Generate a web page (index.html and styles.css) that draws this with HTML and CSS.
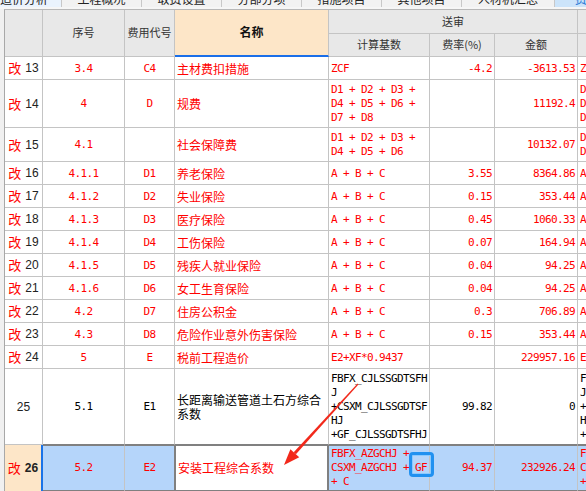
FILE: index.html
```html
<!DOCTYPE html>
<html lang="zh-CN">
<head>
<meta charset="utf-8">
<title>费用汇总</title>
<link rel="stylesheet" href="styles.css">
</head>
<body>
<div class="tabs">
  <div class="tab first"><span>造价分析</span></div>
  <div class="tab"><span>工程概况</span></div>
  <div class="tab"><span>取费设置</span></div>
  <div class="tab"><span>分部分项</span></div>
  <div class="tab"><span>措施项目</span></div>
  <div class="tab"><span>其他项目</span></div>
  <div class="tab wide"><span>人材机汇总</span></div>
  <div class="tab active"><span>费用汇总</span></div>
</div>
<div class="gap"></div>
<div class="main">
  <div class="side"></div>
  <div class="sheet">
    <div class="c h tall"></div>
    <div class="c h tall">序号</div>
    <div class="c h tall">费用代号</div>
    <div class="c h tall name-h">名称</div>
    <div class="c h group">送审</div>
    <div class="c h">审定</div>
    <div class="c h">计算基数</div>
    <div class="c h">费率(%)</div>
    <div class="c h">金额</div>
    <div class="c h">计算基数</div>

    <div class="c rh"><span class="gai">改</span><span class="no">13</span></div>
    <div class="c mono ctr">3.4</div>
    <div class="c mono ctr">C4</div>
    <div class="c nm">主材费扣措施</div>
    <div class="c mono"><span class="f">ZCF</span></div>
    <div class="c mono rt">-4.2</div>
    <div class="c mono rt">-3613.53</div>
    <div class="c mono"><span class="f">ZCF</span></div>

    <div class="c rh"><span class="gai">改</span><span class="no">14</span></div>
    <div class="c mono ctr">4</div>
    <div class="c mono ctr">D</div>
    <div class="c nm">规费</div>
    <div class="c mono"><span class="f">D1 + D2 + D3 +<br>D4 + D5 + D6 +<br>D7 + D8</span></div>
    <div class="c mono rt"></div>
    <div class="c mono rt">11192.4</div>
    <div class="c mono"><span class="f">D1 + D2 + D3 +<br>D4 + D5 + D6 +<br>D7 + D8</span></div>

    <div class="c rh"><span class="gai">改</span><span class="no">15</span></div>
    <div class="c mono ctr">4.1</div>
    <div class="c mono ctr"></div>
    <div class="c nm">社会保障费</div>
    <div class="c mono"><span class="f">D1 + D2 + D3 +<br>D4 + D5 + D6</span></div>
    <div class="c mono rt"></div>
    <div class="c mono rt">10132.07</div>
    <div class="c mono"><span class="f">D1 + D2 + D3 +<br>D4 + D5 + D6</span></div>

    <div class="c rh"><span class="gai">改</span><span class="no">16</span></div>
    <div class="c mono ctr">4.1.1</div>
    <div class="c mono ctr">D1</div>
    <div class="c nm">养老保险</div>
    <div class="c mono"><span class="f">A + B + C</span></div>
    <div class="c mono rt">3.55</div>
    <div class="c mono rt">8364.86</div>
    <div class="c mono"><span class="f">A + B + C</span></div>

    <div class="c rh"><span class="gai">改</span><span class="no">17</span></div>
    <div class="c mono ctr">4.1.2</div>
    <div class="c mono ctr">D2</div>
    <div class="c nm">失业保险</div>
    <div class="c mono"><span class="f">A + B + C</span></div>
    <div class="c mono rt">0.15</div>
    <div class="c mono rt">353.44</div>
    <div class="c mono"><span class="f">A + B + C</span></div>

    <div class="c rh"><span class="gai">改</span><span class="no">18</span></div>
    <div class="c mono ctr">4.1.3</div>
    <div class="c mono ctr">D3</div>
    <div class="c nm">医疗保险</div>
    <div class="c mono"><span class="f">A + B + C</span></div>
    <div class="c mono rt">0.45</div>
    <div class="c mono rt">1060.33</div>
    <div class="c mono"><span class="f">A + B + C</span></div>

    <div class="c rh"><span class="gai">改</span><span class="no">19</span></div>
    <div class="c mono ctr">4.1.4</div>
    <div class="c mono ctr">D4</div>
    <div class="c nm">工伤保险</div>
    <div class="c mono"><span class="f">A + B + C</span></div>
    <div class="c mono rt">0.07</div>
    <div class="c mono rt">164.94</div>
    <div class="c mono"><span class="f">A + B + C</span></div>

    <div class="c rh"><span class="gai">改</span><span class="no">20</span></div>
    <div class="c mono ctr">4.1.5</div>
    <div class="c mono ctr">D5</div>
    <div class="c nm">残疾人就业保险</div>
    <div class="c mono"><span class="f">A + B + C</span></div>
    <div class="c mono rt">0.04</div>
    <div class="c mono rt">94.25</div>
    <div class="c mono"><span class="f">A + B + C</span></div>

    <div class="c rh"><span class="gai">改</span><span class="no">21</span></div>
    <div class="c mono ctr">4.1.6</div>
    <div class="c mono ctr">D6</div>
    <div class="c nm">女工生育保险</div>
    <div class="c mono"><span class="f">A + B + C</span></div>
    <div class="c mono rt">0.04</div>
    <div class="c mono rt">94.25</div>
    <div class="c mono"><span class="f">A + B + C</span></div>

    <div class="c rh"><span class="gai">改</span><span class="no">22</span></div>
    <div class="c mono ctr">4.2</div>
    <div class="c mono ctr">D7</div>
    <div class="c nm">住房公积金</div>
    <div class="c mono"><span class="f">A + B + C</span></div>
    <div class="c mono rt">0.3</div>
    <div class="c mono rt">706.89</div>
    <div class="c mono"><span class="f">A + B + C</span></div>

    <div class="c rh"><span class="gai">改</span><span class="no">23</span></div>
    <div class="c mono ctr">4.3</div>
    <div class="c mono ctr">D8</div>
    <div class="c nm">危险作业意外伤害保险</div>
    <div class="c mono"><span class="f">A + B + C</span></div>
    <div class="c mono rt">0.15</div>
    <div class="c mono rt">353.44</div>
    <div class="c mono"><span class="f">A + B + C</span></div>

    <div class="c rh"><span class="gai">改</span><span class="no">24</span></div>
    <div class="c mono ctr">5</div>
    <div class="c mono ctr">E</div>
    <div class="c nm">税前工程造价</div>
    <div class="c mono"><span class="f">E2+XF*0.9437</span></div>
    <div class="c mono rt"></div>
    <div class="c mono rt">229957.16</div>
    <div class="c mono"><span class="f">E2+XF*0.9437</span></div>

    <div class="c rh"><span class="no">25</span></div>
    <div class="c mono ctr blk above">5.1</div>
    <div class="c mono ctr blk above">E1</div>
    <div class="c nm blk above">长距离输送管道土石方综合系数</div>
    <div class="c mono blk above"><span class="f">FBFX_CJLSSGDTSFH<br>J<br>+CSXM_CJLSSGDTSF<br>HJ<br>+GF_CJLSSGDTSFHJ</span></div>
    <div class="c mono rt blk above">99.82</div>
    <div class="c mono rt blk above">0</div>
    <div class="c mono blk above"><span class="f">FBFX_CJLSSGDTSFH<br>J<br>+CSXM_CJLSSGDTSF<br>HJ<br>+GF_CJLSSGDTSFHJ</span></div>

    <div class="c rh sel-rh"><span class="gai">改</span><span class="no bold">26</span></div>
    <div class="c mono ctr sel">5.2</div>
    <div class="c mono ctr sel code">E2</div>
    <div class="c nm sel name">安装工程综合系数</div>
    <div class="c mono sel"><span class="f">FBFX_AZGCHJ +<br>CSXM_AZGCHJ + GF<br>+ C</span></div>
    <div class="c mono rt sel">94.37</div>
    <div class="c mono rt sel">232926.24</div>
    <div class="c mono sel"><span class="f">FBFX_AZGCHJ +<br>CSXM_AZGCHJ + GF<br>+ C</span></div>

    <div class="c rh"></div>
    <div class="c"></div>
    <div class="c"></div>
    <div class="c"></div>
    <div class="c"></div>
    <div class="c"></div>
    <div class="c"></div>
    <div class="c"></div>
  </div>
</div>
<div class="gf-mark"></div>
<svg class="arrow" width="586" height="491" viewBox="0 0 586 491">
  <polygon points="357.6,383.6 358.4,384.4 295.9,454.2 293.7,452.2" fill="#f2291b"/>
  <polygon points="284,465 299.2,457.3 290.4,449.2" fill="#f2291b"/>
</svg>
</body>
</html>
```

FILE: styles.css
```css
* {
  box-sizing: border-box;
}

html,
body {
  margin: 0;
  padding: 0;
}

body {
  position: relative;
  width: 586px;
  height: 491px;
  overflow: hidden;
  background: #ffffff;
  font-family: "Noto Sans CJK SC", "Noto Sans", sans-serif;
  font-size: 12px;
}

/* ---------- tab strip ---------- */
.tabs {
  display: flex;
  height: 7px;
  overflow: hidden;
  background: #f0f0f0;
}

.tab {
  flex: 0 0 80px;
  display: flex;
  justify-content: center;
  border-right: 1px solid #c8c8c8;
  background: #f2f2f2;
  color: #222222;
  font-size: 12px;
  line-height: 12px;
  white-space: nowrap;
}

.tab span {
  display: block;
  margin-top: -7px;
}

.tab.first {
  flex-basis: 36px;
  justify-content: flex-end;
  padding-right: 13px;
  background: #eaf3fd;
}

.tab.wide {
  flex-basis: 93px;
}

.tab.active {
  flex: 1 0 80px;
  justify-content: flex-start;
  padding-left: 20px;
  background: #cce4fa;
  color: #2b7bd6;
  border-right: none;
}

.gap {
  height: 2px;
  background: #f6f6f6;
}

/* ---------- sheet ---------- */
.main {
  display: flex;
  align-items: flex-start;
}

.side {
  flex: none;
  width: 4px;
  height: 482px;
  background: #f0f0f0;
}

.sheet {
  flex: none;
  display: grid;
  grid-template-columns: 38px 82px 50px 154px 101px 65px 83px 101px;
  grid-template-rows: 24px 23px;
  border-top: 1px solid #b8b8b8;
  border-left: 1px solid #a8a8a8;
}

.c {
  display: flex;
  align-items: center;
  min-height: 23px;
  padding: 3px 2px 2px 2px;
  border-right: 1px solid #c4c4c4;
  border-bottom: 1px solid #c4c4c4;
  line-height: 14px;
  color: #ff0000;
  overflow: hidden;
}

/* header */
.h {
  min-height: 0;
  justify-content: center;
  padding: 0 0 2px 0;
  background: #e8e8e8;
  color: #333333;
  font-size: 11px;
  white-space: nowrap;
}

.tall {
  grid-row: span 2;
}

.group {
  grid-column: span 3;
}

.name-h {
  background: #fde6c8;
  border-bottom: 2px solid #1a6ee8;
  color: #111111;
  font-size: 12px;
  font-weight: bold;
}

/* row header */
.rh {
  justify-content: center;
  gap: 4px;
  padding: 0;
  color: #222222;
}

.gai {
  color: #ff0000;
  font-size: 13px;
}

.no {
  font-family: "Liberation Sans", Arial, sans-serif;
  font-size: 12px;
}

.bold {
  font-weight: bold;
}

/* data */
.mono {
  font-family: "DejaVu Sans Mono", monospace;
  font-size: 11px;
  letter-spacing: -0.62px;
}

.f {
  white-space: nowrap;
}

.ctr {
  justify-content: center;
}

.rt {
  justify-content: flex-end;
}

.nm {
  font-size: 12px;
}

.blk {
  color: #000000;
}

.above {
  border-bottom-color: #808080;
}

/* selected row */
.sel-rh {
  background: #fde6c8;
  border-right: 2px solid #1a73e8;
}

.sel {
  background: #b5d5fa;
  border-top: 1px solid #808080;
  border-bottom: 2px solid #808080;
  padding-top: 1px;
  padding-bottom: 1px;
}

.sel.code {
  border-right-color: #808080;
}

.sel.name {
  background: #ffffff;
  border-left: 1px solid #808080;
  border-right: 2px solid #808080;
}

/* annotations */
.gf-mark {
  position: absolute;
  left: 409px;
  top: 452px;
  width: 25px;
  height: 25px;
  border: 3px solid #2191f0;
  border-radius: 4px;
  box-shadow: inset 0 0 0 1px #8ccaff;
}

.arrow {
  position: absolute;
  left: 0;
  top: 0;
  pointer-events: none;
}
```
